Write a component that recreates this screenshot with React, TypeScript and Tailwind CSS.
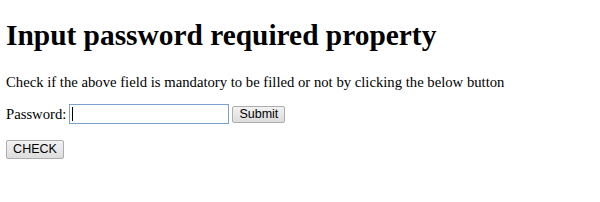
export default function App() {
  return (
    <div className="min-h-screen bg-white px-[6px] pt-px font-['Liberation_Serif',serif] text-black">
      <h1 className="mt-[18px] text-[29.4px] font-bold leading-[32px]">Input password required property</h1>
      <p className="mt-[23px] text-[14.7px] leading-[17px]">
        Check if the above field is mandatory to be filled or not by clicking the below button
      </p>
      <form className="mt-[13px] flex items-center text-[14.7px] leading-[17px]" onSubmit={(e) => e.preventDefault()}>
        <label htmlFor="pwd" className="mr-[3px]">Password:</label>
        <div className="relative">
          <input
            id="pwd"
            type="password"
            required
            autoFocus
            className="block h-[20px] w-[160px] border border-[#7da2ce] bg-white px-[2px] outline-none"
          />
          {/* caret of the focused field */}
          <span className="pointer-events-none absolute left-[3px] top-[3px] h-[14px] w-px bg-black" />
        </div>
        <button
          type="submit"
          className="ml-[3px] h-[17px] w-[53px] rounded-[2px] border border-[#adadad] bg-gradient-to-b from-[#f2f2f2] to-[#dddddd] font-['Liberation_Sans',sans-serif] text-[12.5px] leading-[15px] text-black"
        >
          Submit
        </button>
      </form>
      <div className="mt-[12px]">
        <button className="h-[19px] w-[58px] rounded-[2px] border border-[#adadad] bg-gradient-to-b from-[#f2f2f2] to-[#dddddd] font-['Liberation_Sans',sans-serif] text-[12.5px] leading-[15px] text-black">
          CHECK
        </button>
      </div>
    </div>
  );
}
